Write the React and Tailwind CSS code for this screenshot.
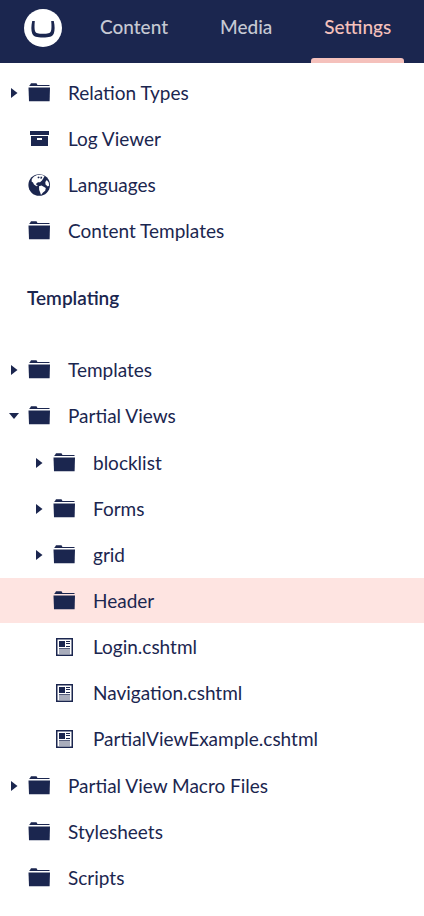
import { useState } from 'react';
import clsx from 'clsx';

const sections = ['Content', 'Media', 'Settings'];

const settingsItems = [
  { label: 'Relation Types', icon: 'folder', expandable: true },
  { label: 'Log Viewer', icon: 'box' },
  { label: 'Languages', icon: 'globe' },
  { label: 'Content Templates', icon: 'folder' },
];

const templatingItems = [
  { label: 'Templates', icon: 'folder', expandable: true },
  {
    label: 'Partial Views',
    icon: 'folder',
    expandable: true,
    children: [
      { label: 'blocklist', icon: 'folder', expandable: true },
      { label: 'Forms', icon: 'folder', expandable: true },
      { label: 'grid', icon: 'folder', expandable: true },
      { label: 'Header', icon: 'folder' },
      { label: 'Login.cshtml', icon: 'article' },
      { label: 'Navigation.cshtml', icon: 'article' },
      { label: 'PartialViewExample.cshtml', icon: 'article' },
    ],
  },
  { label: 'Partial View Macro Files', icon: 'folder', expandable: true },
  { label: 'Stylesheets', icon: 'folder' },
  { label: 'Scripts', icon: 'folder' },
];

function Logo() {
  return (
    <svg viewBox="0 0 38 38" className="size-[38px]" aria-hidden="true">
      <circle cx="19" cy="19" r="19" fill="#fff" />
      <path
        d="M8.2 12H10.8C10.4 16.5 10.4 20 11 22C11.7 24.3 14.5 24.8 19 24.8S26.3 24.3 27 22C27.6 20 27.6 16.5 27.2 12H29.8C30.9 17 30.9 21.5 29.8 24.4C28.6 27.5 25 28.4 19 28.4S9.4 27.5 8.2 24.4C7.1 21.5 7.1 17 8.2 12Z"
        fill="#1b264f"
      />
    </svg>
  );
}

function Icon({ name }) {
  return (
    <svg
      viewBox="0 0 22 23"
      className="h-[23px] w-[22px] shrink-0"
      fill="currentColor"
      aria-hidden="true"
    >
      {name === 'folder' && (
        <>
          <path d="M1.5 5V4H2L3 2.3H8.5L9.5 4H21.5V5Z" />
          <path d="M.5 6.6H22L21.6 20.3H1Z" />
        </>
      )}
      {name === 'box' && (
        <>
          <path d="M2 4H21V8H2Z" />
          <path fillRule="evenodd" d="M3 9H20V19H3ZM9 11V13H14V11Z" />
        </>
      )}
      {name === 'globe' && (
        <>
          <circle cx="11.2" cy="12" r="10.8" />
          <path
            d="M3.8 6 6 3.5 9 2 13.5 1.8 16.5 3 15.5 5 14 7.5 12 9.2 10 9.2 8.3 10.6 8.3 12 10 12.8 8.5 13.2 6 11.5 5 9.5 3.6 8.5ZM11 13.2 13.5 12.6 17.8 15 17.2 17.8 15 19.5 13 22 12.2 19.5 11.2 17ZM18.8 7 20.7 9.5 21.2 12.5 19.8 13.6 17.5 11.5 17.3 9Z"
            fill="#fff"
          />
          <path d="M9.5 4 11 3.5 11.7 4.7 10 5.5ZM12.8 3.5 14.3 4 13.6 5.8 12.2 5.5Z" />
        </>
      )}
      {name === 'article' && (
        <>
          <path fillRule="evenodd" d="M3 3H20V21H3ZM4.500 4.500V19.500H18.500V4.500Z" />
          <path d="M6 6H12V12H6ZM13 6H17V7H13ZM13 8H17V9H13ZM13 11H17V12H13Z" />
          <path fillOpacity=".75" d="M6 13H17V14.500H6ZM6 15.500H17V16.500H6ZM6 17.500H17V18.500H6Z" />
        </>
      )}
    </svg>
  );
}

function Caret({ open }) {
  return (
    <svg viewBox="0 0 10 10" className="size-2.5" fill="currentColor" aria-hidden="true">
      <path d={open ? 'M0 2H10L5 8Z' : 'M2 0 8.5 5 2 10Z'} />
    </svg>
  );
}

function TreeItem({ item, nested, selected, onSelect }) {
  const [open, setOpen] = useState(Boolean(item.children));

  return (
    <li>
      <div
        className={clsx(
          'mb-px flex h-[45px] items-center',
          nested ? 'pl-[34px]' : 'pl-[9px]',
          selected === item.label && 'bg-[#fee4e1]',
        )}
      >
        <span className="flex w-[19px] shrink-0">
          {item.expandable && (
            <button
              type="button"
              aria-label={`Toggle ${item.label}`}
              aria-expanded={open}
              onClick={() => setOpen(!open)}
            >
              <Caret open={open} />
            </button>
          )}
        </span>
        <a
          href="#"
          className="flex flex-1 items-center gap-[18px]"
          onClick={() => onSelect(item.label)}
        >
          <Icon name={item.icon} />
          {item.label}
        </a>
      </div>
      {item.children && open && (
        <Tree items={item.children} nested selected={selected} onSelect={onSelect} />
      )}
    </li>
  );
}

function Tree({ items, nested = false, selected, onSelect }) {
  return (
    <ul className={clsx(nested && 'py-px')}>
      {items.map((item) => (
        <TreeItem
          key={item.label}
          item={item}
          nested={nested}
          selected={selected}
          onSelect={onSelect}
        />
      ))}
    </ul>
  );
}

export default function App() {
  const [section, setSection] = useState('Settings');
  const [selected, setSelected] = useState('Header');

  return (
    <div className="min-h-screen bg-white font-['Lato',sans-serif] text-[19px] leading-6 text-[#1b264f]">
      <header className="flex h-[63px] items-stretch gap-[25px] bg-[#1b264f] pl-6">
        <a href="#" aria-label="Home" className="pt-[9px]">
          <Logo />
        </a>
        <nav className="flex gap-[26px]">
          {sections.map((name) => (
            <button
              key={name}
              type="button"
              onClick={() => setSection(name)}
              className={clsx(
                'flex flex-col justify-between px-[13px] pt-[15px] font-medium',
                section === name ? 'text-[#f5c1bc]' : 'text-[#c6c9d3]',
              )}
            >
              {name}
              {section === name && (
                <span className="-mx-[13px] h-[5px] self-stretch rounded-t-[3px] bg-[#f5c1bc]" />
              )}
            </button>
          ))}
        </nav>
      </header>
      <main className="pt-[7px]">
        <Tree items={settingsItems} selected={selected} onSelect={setSelected} />
        <h2 className="px-[27px] pt-8 pb-[37px] font-semibold">Templating</h2>
        <Tree items={templatingItems} selected={selected} onSelect={setSelected} />
      </main>
    </div>
  );
}
